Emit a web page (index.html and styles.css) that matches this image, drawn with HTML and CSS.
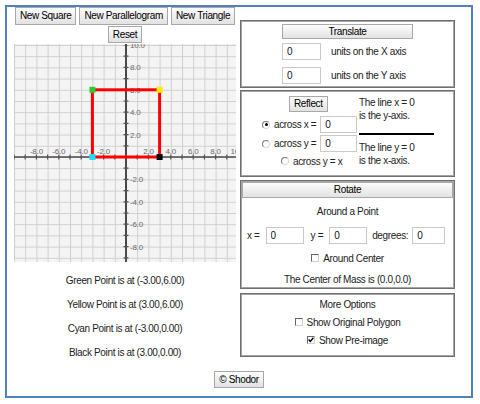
FILE: index.html
```html
<!DOCTYPE html>
<html lang="en">
<head>
    <meta charset="UTF-8">
    <title>Transmographer</title>
    <link rel="stylesheet" href="styles.css">
</head>
<body>

<div class="frame">
    <div class="main">
        <div class="left">
            <div class="shape-buttons">
                <button class="btn">New Square</button>
                <button class="btn">New Parallelogram</button>
                <button class="btn">New Triangle</button>
            </div>
            <div class="reset-row">
                <button class="btn">Reset</button>
            </div>

            <!-- coordinate plane, 11.2px per unit, origin at 112,113 -->
            <svg class="plane" width="222" height="218" viewBox="0 0 222 218">
                <defs>
                    <pattern id="cells" width="11.2" height="11.2" x="0" y="1" patternUnits="userSpaceOnUse">
                        <path d="M0 0H11.2M0 0V11.2" stroke="#cfcfcf" stroke-width="2" fill="none"/>
                    </pattern>
                </defs>
                <rect width="222" height="218" fill="#f4f4f4"/>
                <rect width="222" height="218" fill="url(#cells)"/>

                <line x1="0" y1="113" x2="222" y2="113" stroke="#4a4a4a" stroke-width="1.6"/>
                <line x1="112" y1="0" x2="112" y2="218" stroke="#4a4a4a" stroke-width="2"/>
                <line x1="0" y1="113" x2="222" y2="113" stroke="#555" stroke-width="5" stroke-dasharray="1.2 10" stroke-dashoffset="0.6"/>
                <line x1="112" y1="1" x2="112" y2="218" stroke="#555" stroke-width="5" stroke-dasharray="1.2 10" stroke-dashoffset="0.6"/>

                <g class="lbl x-lbl">
                    <text x="22.4" y="110">-8.0</text>
                    <text x="44.8" y="110">-6.0</text>
                    <text x="67.2" y="110">-4.0</text>
                    <text x="89.6" y="110">-2.0</text>
                    <text x="134.4" y="110">2.0</text>
                    <text x="156.8" y="110">4.0</text>
                    <text x="179.2" y="110">6.0</text>
                    <text x="201.6" y="110">8.0</text>
                    <text x="224" y="110">10.0</text>
                </g>
                <g class="lbl y-lbl">
                    <text x="116" y="4">10.0</text>
                    <text x="116" y="26.4">8.0</text>
                    <text x="116" y="48.8">6.0</text>
                    <text x="116" y="71.2">4.0</text>
                    <text x="116" y="93.6">2.0</text>
                    <text x="116" y="138.4">-2.0</text>
                    <text x="116" y="160.8">-4.0</text>
                    <text x="116" y="183.2">-6.0</text>
                    <text x="116" y="205.6">-8.0</text>
                </g>

                <rect x="78.4" y="45.8" width="67.2" height="67.2" fill="none" stroke="#ff0000" stroke-width="3"/>
                <rect x="75.4" y="42.8" width="6" height="6" fill="#2fcc2f"/>
                <rect x="142.6" y="42.8" width="6" height="6" fill="#f8ec00"/>
                <rect x="75.4" y="110" width="6" height="6" fill="#1fdcff"/>
                <rect x="142.6" y="110" width="6" height="6" fill="#000"/>
            </svg>

            <div class="points">
                <p>Green Point is at (-3.00,6.00)</p>
                <p>Yellow Point is at (3.00,6.00)</p>
                <p>Cyan Point is at (-3.00,0.00)</p>
                <p>Black Point is at (3.00,0.00)</p>
            </div>
        </div>

        <div class="right">
            <!-- Translate -->
            <div class="panel translate">
                <button class="btn translate-btn">Translate</button>
                <div class="field-row first">
                    <input class="field" value="0">
                    <span>units on the X axis</span>
                </div>
                <div class="field-row">
                    <input class="field" value="0">
                    <span>units on the Y axis</span>
                </div>
            </div>

            <!-- Reflect -->
            <div class="panel reflect">
                <div class="reflect-controls">
                    <button class="btn reflect-btn">Reflect</button>
                    <label class="radio-row row-x"><span class="radio on"></span>across x =<input class="field short" value="0"></label>
                    <label class="radio-row row-y"><span class="radio"></span>across y =<input class="field short" value="0"></label>
                    <label class="radio-row row-diag"><span class="radio"></span>across y = x</label>
                </div>
                <div class="reflect-notes">
                    <p>The line x = 0<br>is the y-axis.</p>
                    <div class="divider"></div>
                    <p>The line y = 0<br>is the x-axis.</p>
                </div>
            </div>

            <!-- Rotate -->
            <div class="panel rotate">
                <button class="btn rotate-btn">Rotate</button>
                <p class="center-line around">Around a Point</p>
                <div class="rotate-inputs">
                    <span>x =</span><input class="field rx" value="0">
                    <span class="ylab">y =</span><input class="field ry" value="0">
                    <span class="dlab">degrees:</span><input class="field rd" value="0">
                </div>
                <label class="check-row center-check"><span class="check"></span>Around Center</label>
                <p class="center-line mass">The Center of Mass is (0.0,0.0)</p>
            </div>

            <!-- More options -->
            <div class="panel options">
                <p class="center-line">More Options</p>
                <label class="check-row opt-1"><span class="check"></span>Show Original Polygon</label>
                <label class="check-row opt-2"><span class="check"><svg width="6" height="6" viewBox="0 0 6 6"><path d="M0.6 2.6L2.3 4.4L5.4 0.8" stroke="#000" stroke-width="1.4" fill="none"/></svg></span>Show Pre-image</label>
            </div>
        </div>
    </div>

    <div class="footer">
        <button class="btn">&copy; Shodor</button>
    </div>
</div>

</body>
</html>
```

FILE: styles.css
```css
* {
    box-sizing: border-box;
}

body {
    margin: 0;
    font-family: "Liberation Sans", Arial, sans-serif;
    font-size: 10px;
    letter-spacing: -0.35px;
    color: #222;
    background-color: #fff;
}

.frame {
    margin: 5px;
    width: 468px;
    height: 393px;
    border: 2px solid #4f81bd;
    display: flex;
    flex-direction: column;
}

.main {
    display: flex;
    gap: 4px;
    padding-left: 7px;
}

/* buttons */
.btn {
    font: inherit;
    letter-spacing: inherit;
    color: #000;
    height: 18px;
    padding: 0 4px;
    line-height: 16px;
    border: 1px solid #a8a8a8;
    border-radius: 0;
    background: linear-gradient(#fdfdfd, #e2e2e2);
}

/* left column */
.left {
    width: 222px;
}

.shape-buttons {
    display: flex;
    justify-content: center;
    gap: 3px;
}

.reset-row {
    display: flex;
    justify-content: center;
    margin-top: 1px;
}

.reset-row .btn {
    height: 17px;
}

.plane {
    display: block;
    margin-top: 1px;
}

.lbl text {
    font-family: "Liberation Sans", Arial, sans-serif;
    font-size: 8px;
    letter-spacing: -0.2px;
    fill: #6a6a6a;
}

.x-lbl text {
    text-anchor: middle;
}

.points {
    margin-top: 7px;
}

.points p {
    margin: 0;
    height: 24px;
    line-height: 24px;
    text-align: center;
}

/* right column */
.right {
    width: 215px;
    margin-top: 13px;
    display: flex;
    flex-direction: column;
}

.panel {
    border: 1px solid #6f6f6f;
    box-shadow: inset 0 0 0 1px #a5a5a5;
    padding: 1px;
}

.field {
    font: inherit;
    letter-spacing: inherit;
    color: #111;
    width: 39px;
    height: 17px;
    padding: 0 0 0 4px;
    border: 1px solid #c9c9c9;
    border-radius: 0;
    background-color: #fff;
    outline: none;
}

.translate {
    height: 68px;
    margin-bottom: 2px;
    padding-left: 41px;
}

.translate-btn {
    display: block;
    width: 131px;
    height: 15px;
    line-height: 13px;
    margin-top: 2px;
}

.field-row {
    display: flex;
    align-items: center;
    gap: 10px;
    margin-top: 7px;
}

.field-row.first {
    margin-top: 4px;
}

/* reflect */
.reflect {
    height: 87px;
    margin-bottom: 3px;
    display: flex;
}

.reflect-controls {
    width: 117px;
    padding-top: 4px;
}

.reflect-btn {
    display: block;
    height: 16px;
    line-height: 14px;
    margin-left: 47px;
}

.radio-row {
    display: flex;
    align-items: center;
    height: 17px;
    padding-left: 20px;
}

.radio-row .field {
    width: 37px;
    margin-left: 4px;
}

.row-x {
    margin-top: 4px;
}

.row-y {
    margin-top: 2px;
}

.row-diag {
    height: 12px;
    margin-top: 3px;
    padding-left: 39px;
}

.radio {
    display: flex;
    align-items: center;
    justify-content: center;
    width: 8px;
    height: 8px;
    margin-right: 4px;
    border: 1px solid;
    border-color: #777 #d8d8d8 #d8d8d8 #777;
    border-radius: 50%;
    background-color: #fff;
}

.radio.on::after {
    content: "";
    width: 3px;
    height: 3px;
    border-radius: 50%;
    background-color: #000;
}

.reflect-notes {
    padding-top: 4px;
}

.reflect-notes p {
    margin: 0;
    line-height: 13px;
}

.divider {
    width: 75px;
    height: 2px;
    margin: 11px 0 6px;
    background-color: #000;
}

/* rotate */
.rotate {
    height: 109px;
    margin-bottom: 4px;
}

.rotate-btn {
    display: block;
    width: 100%;
    height: 16px;
    line-height: 14px;
}

.center-line {
    margin: 0;
    height: 12px;
    line-height: 12px;
    text-align: center;
}

.around {
    margin-top: 8px;
}

.rotate-inputs {
    display: flex;
    align-items: center;
    height: 17px;
    margin-top: 9px;
    padding-left: 5px;
}

.rotate-inputs .rx,
.rotate-inputs .ry {
    width: 38px;
    margin-left: 6px;
}

.rotate-inputs .rd {
    width: 33px;
    margin-left: 4px;
}

.ylab {
    margin-left: 7px;
}

.dlab {
    margin-left: 5px;
}

.check-row {
    display: flex;
    align-items: center;
    justify-content: center;
    height: 12px;
}

.check {
    display: flex;
    align-items: center;
    justify-content: center;
    width: 8px;
    height: 8px;
    margin-right: 4px;
    border: 1px solid;
    border-color: #666 #cfcfcf #cfcfcf #666;
    background-color: #fff;
}

.center-check {
    margin-top: 8px;
}

.mass {
    margin-top: 10px;
}

/* more options */
.options {
    height: 64px;
    padding-top: 5px;
}

.opt-1 {
    margin-top: 5px;
}

.opt-2 {
    margin-top: 6px;
}

/* footer */
.footer {
    display: flex;
    justify-content: center;
    margin-top: 6px;
}

.footer .btn {
    height: 17px;
    line-height: 15px;
}
```
